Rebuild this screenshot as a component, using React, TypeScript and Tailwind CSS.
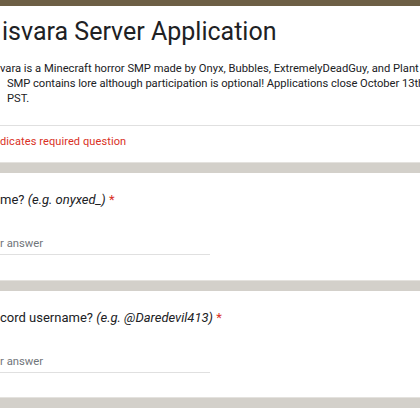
import React from "react";

const Band = () => (
  <div className="h-[11px] shrink-0 bg-[#d3d0ca] border-t border-[#e4e2de]" />
);

const Question = ({ pre, hint, h }: { pre: string; hint: string; h: string }) => (
  <div className={`${h} shrink-0 bg-white flex flex-col pt-[17px]`}>
    <div className="text-[13px] leading-[20px] text-[#202124] whitespace-nowrap">
      {pre} <span className="italic">{hint}</span>{" "}
      <span className="text-[#d93025]">*</span>
    </div>
    <div className="mt-[26px] text-[11.3px] leading-[15px] text-[#70757a] whitespace-nowrap">
      r answer
    </div>
    <div className="mt-[3px] h-px w-[210px] bg-[#e0e0e0]" />
  </div>
);

export default function App() {
  return (
    <div
      className="w-[420px] h-[420px] overflow-hidden bg-white flex flex-col"
      style={{ fontFamily: "Roboto, 'Liberation Sans', sans-serif" }}
    >
      <div className="h-[6px] shrink-0 bg-[#6d5f45]" />
      <div className="h-[156px] shrink-0 bg-white flex flex-col overflow-hidden">
        <div className="pt-[10px] pl-[2px] text-[25px] leading-[32px] text-[#202124] whitespace-nowrap">
          isvara Server Application
        </div>
        <div className="mt-[13px] text-[11.2px] leading-[15px] text-[#202124] whitespace-nowrap">
          <div>vara is a Minecraft horror SMP made by Onyx, Bubbles, ExtremelyDeadGuy, and Plant</div>
          <div className="pl-[7px] tracking-[-0.05px]">SMP contains lore although participation is optional! Applications close October 13th</div>
          <div className="pl-[7px]">PST.</div>
        </div>
        <div className="mt-[19px] h-px bg-[#e0e0e0]" />
        <div className="mt-[9px] text-[11px] leading-[14.5px] text-[#d93025] tracking-[0.1px] whitespace-nowrap">
          dicates required question
        </div>
      </div>
      <Band />
      <Question pre="me?" hint="(e.g. onyxed_)" h="h-[107px]" />
      <Band />
      <Question pre="cord username?" hint="(e.g. @Daredevil413)" h="h-[106px]" />
      <Band />
      <div className="flex-1 bg-white" />
    </div>
  );
}
